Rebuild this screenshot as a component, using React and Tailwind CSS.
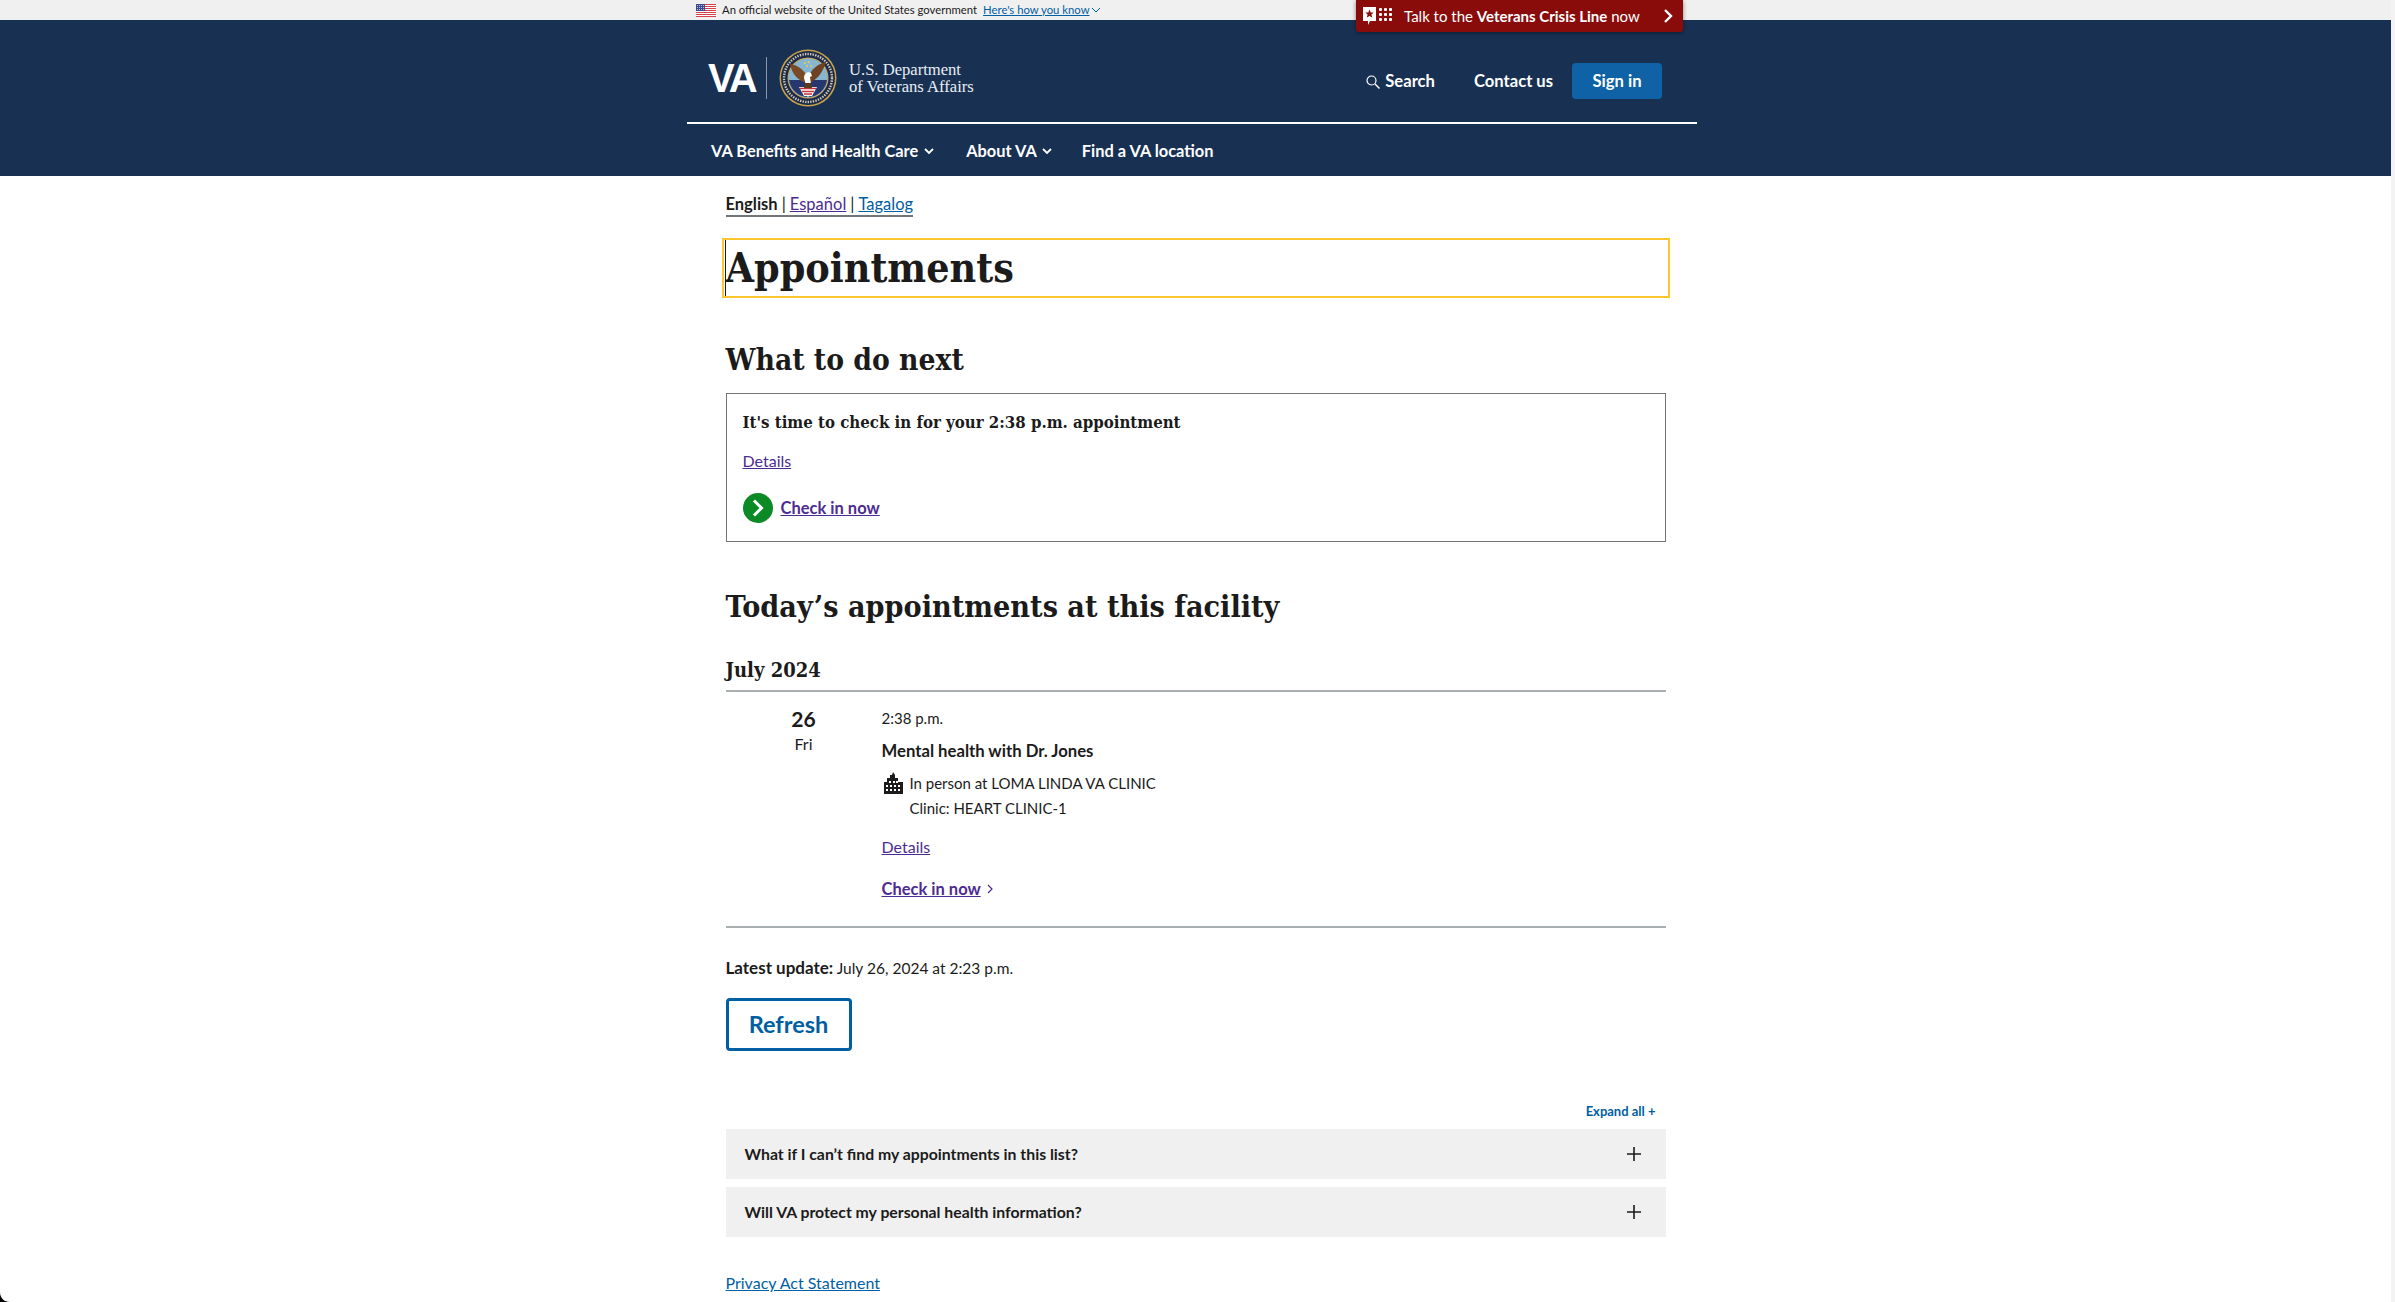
import React from "react"

const sans = "font-['Lato',sans-serif]"
const slab = "font-['DejaVu_Serif',serif] font-bold [font-stretch:condensed] text-[#1b1b1b]"
const visited = "text-[#4c2c92] underline"

const Flag = () => (
  <svg width="20" height="13" viewBox="0 0 20 13" className="shrink-0">
    <rect width="20" height="13" fill="#fff" />
    {[0, 2, 4, 6, 8, 10, 12].map((y) => (
      <rect key={y} y={y} width="20" height="1" fill="#d8404a" />
    ))}
    <rect width="9" height="7" fill="#3c4a8f" />
    <path d="M1 1.5h7M1 3.5h7M1 5.5h7" stroke="#cfd6ee" strokeWidth="0.8" strokeDasharray="1 1" />
  </svg>
)

const Chevron = ({ className = "", size = 10, width = 1.6, color = "currentColor" }) => (
  <svg width={size} height={size} viewBox="0 0 10 10" className={className}>
    <path d="M1 3l4 4 4-4" fill="none" stroke={color} strokeWidth={width} />
  </svg>
)

const CrisisIcon = () => (
  <svg width="30" height="19" viewBox="0 0 30 19" className="shrink-0">
    <path d="M0 0h13v14H7l-2 4v-4H0z" fill="#fff" />
    <path d="M6.5 2.5l1.2 2.9 3 .2-2.3 2 .8 3-2.7-1.6-2.7 1.6.8-3-2.3-2 3-.2z" fill="#8a0c0a" />
    {[1, 6, 11].map((y) =>
      [16, 21, 26].map((x) => <rect key={x + "-" + y} x={x} y={y} width="3" height="3" rx="1" fill="#fff" />)
    )}
  </svg>
)

const Seal = () => (
  <svg width="58" height="58" viewBox="0 0 58 58" className="shrink-0">
    <circle cx="29" cy="29" r="28.5" fill="#c9a24a" />
    <circle cx="29" cy="29" r="27" fill="#1c2a4a" />
    <circle cx="29" cy="29" r="24" fill="none" stroke="#cfc9b4" strokeWidth="2.400" strokeDasharray="1.400 1.200" />
    <circle cx="29" cy="29" r="20.500" fill="#c9a24a" />
    <circle cx="29" cy="29" r="19.500" fill="#86b6d2" />
    <path d="M10 31h16l2 17a19.500 19.500 0 0 1-18-17z" fill="#26386e" />
    <path d="M48 31H32l-2 17a19.500 19.500 0 0 0 18-17z" fill="#26386e" />
    <path d="M28 34c-9-2-15-9-17-19 7 1 14 5 18 14z" fill="#7a4a26" />
    <path d="M30 34c8-3 14-11 17-21-8 2-15 7-18 16z" fill="#6d4122" />
    <path d="M25 29c0-4 3-7 7-5l1 3-2 1 1 7-5 1z" fill="#fff" />
    <path d="M20 38h18l-5 9h-8z" fill="#fff" />
    <path d="M21 39.500h16M23 42.500h12M25 45h8" stroke="#c5333b" strokeWidth="1.400" />
    <path d="M26 34h6l1 5h-8z" fill="#5c3a1e" />
    <g fill="#e7c75b">
      <circle cx="26" cy="14" r="1.100" />
      <circle cx="30" cy="13" r="1.100" />
      <circle cx="28" cy="17" r="1.100" />
      <circle cx="32" cy="17" r="1.100" />
    </g>
  </svg>
)

const Building = () => (
  <svg width="19" height="22" viewBox="0 0 19 22" className="shrink-0">
    <path
      fillRule="evenodd"
      d="M9 0l2 3v3h3v4h5v12H0V10h3V6h3V3h2zM5 9v2h2V9zm4 0v2h2V9zm3 0v2h2V9zM2 13v2h2v-2zm4 0v2h2v-2zm4 0v2h2v-2zm4 0v2h2v-2zM2 17v2h2v-2zm4 0v2h2v-2zm4 0v2h2v-2zm4 0v2h2v-2z"
      fill="#1b1b1b"
    />
  </svg>
)

const Plus = () => (
  <svg width="14" height="14" viewBox="0 0 14 14">
    <path d="M7 0v14M0 7h14" stroke="#1b1b1b" strokeWidth="1.6" />
  </svg>
)

const AccordionRow = ({ children }) => (
  <div className="flex h-[50px] items-center justify-between bg-[#f0f0f0] pl-[19px] pr-[25px] text-[15.8px] font-bold text-[#1b1b1b]">
    <span>{children}</span>
    <Plus />
  </div>
)

const Header = () => (
  <header className="bg-[#183153] text-white">
    <div className="relative h-[20px] bg-[#f0f0f0]">
      <div className="ml-[696px] flex h-[20px] items-center text-[11.3px] text-[#1b1b1b]">
        <Flag />
        <span className="ml-[6px]">An official website of the United States government</span>
        <a className="ml-[6px] text-[#005ea2] underline">Here's how you know</a>
        <Chevron className="ml-[1px] text-[#005ea2]" size={10} width={1} />
      </div>
      <div className="absolute left-[1356px] top-0 flex h-[32px] w-[327px] items-center whitespace-nowrap rounded-b-[3px] bg-[#8a0c0a] pl-[7px] text-[15px] text-white shadow-[0_1px_4px_rgba(0,0,0,0.45)]">
        <CrisisIcon />
        <span className="ml-[11px]">
          Talk to the <b>Veterans Crisis Line</b> now
        </span>
        <svg width="10" height="16" viewBox="0 0 10 16" className="absolute right-[10px] top-[8px]">
          <path d="M2 2l6 6-6 6" fill="none" stroke="#fff" strokeWidth="2.4" />
        </svg>
      </div>
    </div>
    <div className="ml-[687px] w-[1010px]">
      <div className="flex h-[104px] items-center border-b-2 border-white pl-[21px] pr-[35px] pt-[14px]">
        <span className="w-[47px] font-['Liberation_Sans',sans-serif] text-[40px] font-bold leading-none tracking-[-3px]">VA</span>
        <div className="ml-[11px] mr-[12px] h-[42px] w-px bg-[#8b98ab]" />
        <Seal />
        <div className="ml-[12px] font-['Liberation_Serif',serif] text-[16.6px] leading-[17px] text-[#e8edf3]">
          U.S. Department
          <br />
          of Veterans Affairs
        </div>
        <div className="ml-auto mt-[6px] flex items-center text-[16.6px] font-bold">
          <svg width="14" height="14" viewBox="0 0 14 14" className="mr-[5px] mt-[2px]">
            <circle cx="5.500" cy="5.500" r="4.500" fill="none" stroke="#fff" strokeWidth="1.200" />
            <path d="M9 9l4.500 4.500" stroke="#fff" strokeWidth="1.400" />
          </svg>
          <span>Search</span>
          <span className="ml-[39px]">Contact us</span>
          <button className="ml-[19px] h-[36px] w-[90px] rounded-[4px] bg-[#0f62a5] font-bold">Sign in</button>
        </div>
      </div>
      <nav className="flex h-[52px] items-center pl-[24px] pt-[2px] text-[16.4px] font-bold">
        <span>VA Benefits and Health Care</span>
        <Chevron className="ml-[6px]" width={1.8} />
        <span className="ml-[32px]">About VA</span>
        <Chevron className="ml-[5px]" width={1.8} />
        <span className="ml-[30px]">Find a VA location</span>
      </nav>
    </div>
  </header>
)

const NextStep = () => (
  <section className="mt-[40px]">
    <h2 className={`${slab} text-[29.7px] leading-[44px]`}>What to do next</h2>
    <div className="mt-[11px] h-[149px] border border-[#757575] pl-[16px] pt-[16px]">
      <h3 className={`${slab} text-[16.7px] leading-[24px]`}>It's time to check in for your 2:38 p.m. appointment</h3>
      <a className={`mt-[15px] block text-[16px] leading-[24px] ${visited}`}>Details</a>
      <div className="mt-[20px] flex items-center">
        <svg width="30" height="30" viewBox="0 0 30 30">
          <circle cx="15" cy="15" r="15" fill="#0b8a26" />
          <path d="M11 7.500l7.500 7.500-7.500 7.500" fill="none" stroke="#fff" strokeWidth="3" />
        </svg>
        <a className={`ml-[8px] text-[16.5px] font-bold ${visited}`}>Check in now</a>
      </div>
    </div>
  </section>
)

const TodayList = () => (
  <section className="mt-[43px]">
    <h2 className={`${slab} text-[30.200px] leading-[44px]`}>Today’s appointments at this facility</h2>
    <h3 className={`${slab} mt-[27px] border-b-2 border-[#a9aeb1] pb-[6px] text-[20px] leading-[28px]`}>July 2024</h3>
    <div className="flex h-[236px] border-b-2 border-[#a9aeb1] text-[15px] text-[#1b1b1b]">
      <div className="w-[156px] pt-[13px] text-center leading-none">
        <div className="text-[21px] font-bold leading-[28px]">26</div>
        <div className="mt-[1px] text-[16px] leading-[20px]">Fri</div>
      </div>
      <div className="flex-1 pt-[14px]">
        <div className="leading-[24px]">2:38 p.m.</div>
        <div className="mt-[9px] text-[16.7px] font-bold leading-[24px]">Mental health with Dr. Jones</div>
        <div className="mt-[9px] flex pl-[2px]">
          <Building />
          <div className="ml-[7px] mt-[-1px] leading-[25px]">
            In person at LOMA LINDA VA CLINIC
            <br />
            Clinic: HEART CLINIC-1
          </div>
        </div>
        <a className={`mt-[14px] block text-[16px] leading-[24px] ${visited}`}>Details</a>
        <div className="mt-[18px] flex items-center leading-[24px]">
          <a className={`text-[16.5px] font-bold ${visited}`}>Check in now</a>
          <svg width="8" height="12" viewBox="0 0 8 12" className="ml-[5px]">
            <path d="M2 2l4 4-4 4" fill="none" stroke="#4c2c92" strokeWidth="1.200" />
          </svg>
        </div>
      </div>
    </div>
  </section>
)

export default function App() {
  return (
    <div className={`relative flex h-[1302px] overflow-hidden bg-white ${sans}`}>
      <div className="min-w-0 flex-1">
        <Header />
        <main className="mx-auto w-[940px]">
          <div className="flex h-[62px] items-center pb-[4px]">
            <div className="flex h-[24px] items-center border-b-2 border-[#71767a] text-[16.5px] leading-[22px]">
              <b className="text-[#1b1b1b]">English</b>
              <span className="mx-[4px] text-[#1b1b1b]">|</span>
              <a className={visited}>Español</a>
              <span className="mx-[4px] text-[#1b1b1b]">|</span>
              <a className="text-[#005ea2] underline">Tagalog</a>
            </div>
          </div>
          <div className="ml-[-4px] mr-[-4px] h-[60px] border-2 border-[#fcc72f] pl-[1px]">
            <h1 className={`${slab} border-l border-[#1b1b1b] text-[40.800px] leading-[56px]`}>Appointments</h1>
          </div>
          <NextStep />
          <TodayList />
          <p className="mt-[28px] text-[15.500px] leading-[24px] text-[#1b1b1b]">
            <b className="text-[17px]">Latest update:</b> July 26, 2024 at 2:23 p.m.
          </p>
          <button className="mt-[18px] block h-[53px] w-[126px] rounded-[4px] border-[3px] border-[#005ea2] text-[23.500px] font-bold text-[#005ea2]">
            Refresh
          </button>
          <div className="mt-[50px] pr-[10px] text-right text-[13px] font-bold leading-[20px] text-[#005ea2]">Expand all +</div>
          <div className="mt-[8px] flex flex-col gap-[8px]">
            <AccordionRow>What if I can’t find my appointments in this list?</AccordionRow>
            <AccordionRow>Will VA protect my personal health information?</AccordionRow>
          </div>
          <a className="mt-[34px] block text-[16px] leading-[24px] text-[#005ea2] underline">Privacy Act Statement</a>
        </main>
      </div>
      <div className="w-[4px] bg-[#f3f3f3]" />
      <svg width="10" height="10" viewBox="0 0 10 10" className="absolute bottom-0 left-0">
        <path d="M0 0v10h10C4 10 0 6 0 0z" fill="#000" />
      </svg>
    </div>
  )
}
